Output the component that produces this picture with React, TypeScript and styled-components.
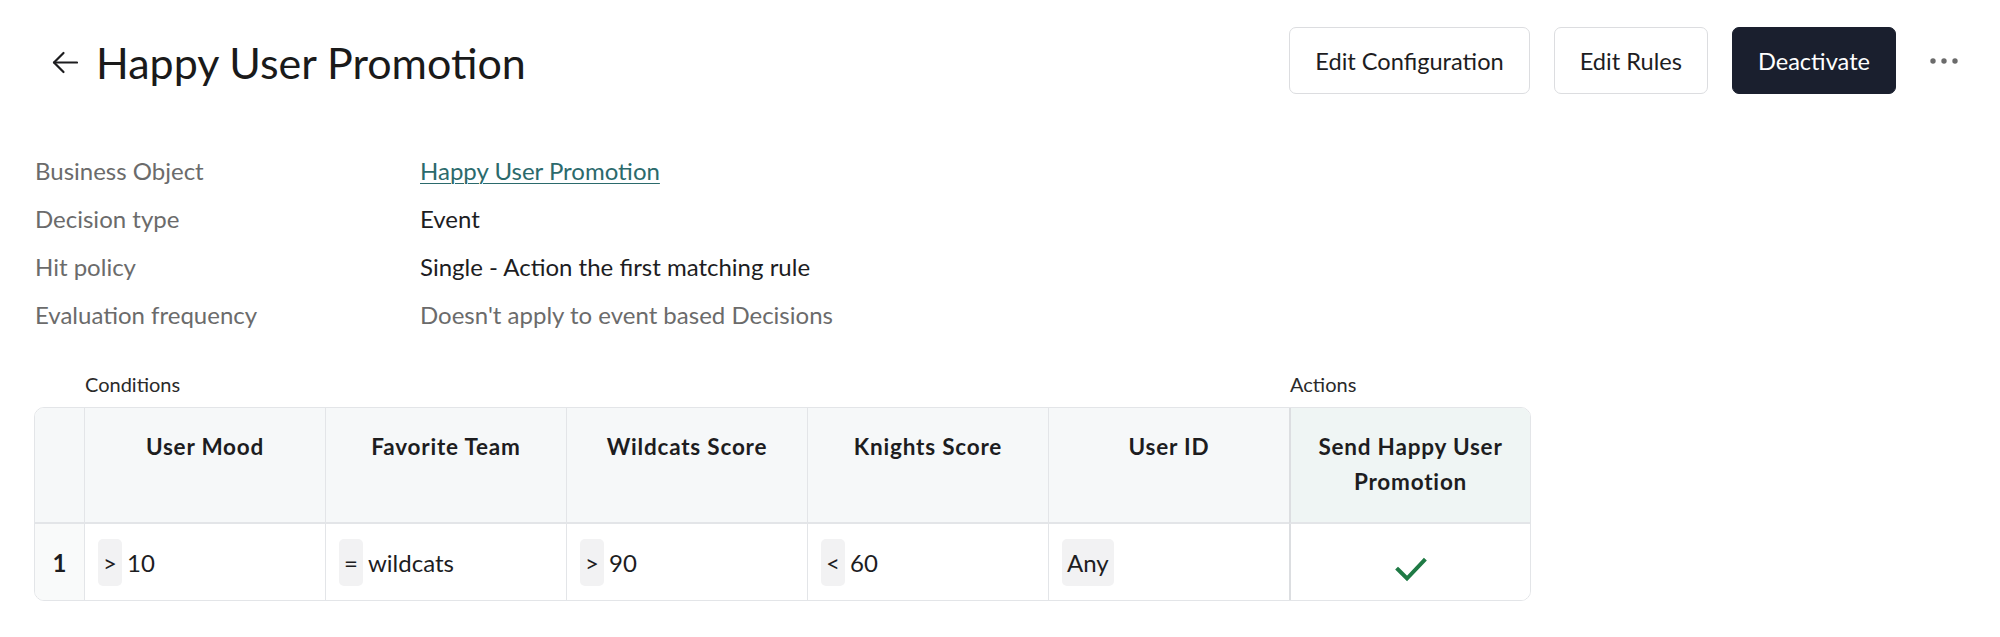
import React from "react";
import styled, { createGlobalStyle } from "styled-components";

const GlobalStyle = createGlobalStyle`
  html, body { margin: 0; padding: 0; background: #ffffff; }
  body { font-family: "Lato", "Noto Sans", sans-serif; color: #1d1d1f; }
  * { box-sizing: border-box; }
`;

const Page = styled.div`
  padding: 0 36px 0 34px;
`;

const Header = styled.header`
  display: flex;
  align-items: center;
  padding-top: 27px;
  height: 94px;
`;

const TitleGroup = styled.div`
  display: flex;
  align-items: center;
  gap: 18px;
  padding-left: 18px;
  padding-top: 4px;
  flex: 1;
`;

const BackButton = styled.button`
  display: flex;
  align-items: center;
  justify-content: center;
  border: none;
  background: none;
  padding: 0;
  cursor: pointer;
  color: #1d1d1f;
`;

const Title = styled.h1`
  margin: 0;
  font-size: 43px;
  font-weight: 400;
  color: #1a1a1a;
  line-height: 1.2;
`;

const Actions = styled.div`
  display: flex;
  align-items: center;
  gap: 24px;
`;

const Button = styled.button<{ $primary?: boolean }>`
  height: 67px;
  padding: 0 25px;
  border-radius: 7px;
  font-family: inherit;
  font-size: 23.6px;
  cursor: pointer;
  border: 1px solid ${(p) => (p.$primary ? "#1a1f2e" : "#dcdde0")};
  background: ${(p) => (p.$primary ? "#1a1f2e" : "#ffffff")};
  color: ${(p) => (p.$primary ? "#ffffff" : "#1d1d1f")};
`;

const MoreButton = styled.button`
  width: 40px;
  height: 40px;
  margin-left: 4px;
  display: flex;
  align-items: center;
  justify-content: center;
  border: none;
  background: none;
  padding: 0;
  cursor: pointer;
`;

const Details = styled.dl`
  display: grid;
  grid-template-columns: 386px 1fr;
  grid-auto-rows: 48px;
  align-items: center;
  margin: 52px 0 0 0;
  font-size: 24px;
`;

const Label = styled.dt`
  color: #6b6b6b;
  padding-left: 1px;
`;

const Value = styled.dd<{ $muted?: boolean }>`
  margin: 0;
  color: ${(p) => (p.$muted ? "#6b6b6b" : "#1d1d1f")};
`;

const Link = styled.a`
  color: #2b6a6c;
  text-decoration: underline;
  text-underline-offset: 3px;
  text-decoration-thickness: 1px;
`;

const SectionLabels = styled.div`
  display: grid;
  grid-template-columns: 50px repeat(5, 241px) 241px;
  margin-top: 34px;
  height: 24px;
  align-items: center;
  font-size: 20px;
  color: #2a2a2a;
`;

const SectionLabel = styled.span<{ $span: number; $start: number }>`
  grid-column: ${(p) => p.$start} / span ${(p) => p.$span};
  padding-left: 1px;
`;

const Table = styled.div`
  margin-top: 11px;
  width: 1497px;
  border: 1px solid #e3e5e8;
  border-radius: 10px;
  overflow: hidden;
  display: grid;
  grid-template-columns: 49px repeat(6, 241px);
  grid-template-rows: 116px 76px;
`;

const HeadCell = styled.div<{ $action?: boolean; $first?: boolean }>`
  background: ${(p) => (p.$action ? "#eff5f4" : "#f6f8f9")};
  border-bottom: 2px solid #e3e5e8;
  border-left: ${(p) =>
    p.$first ? "none" : p.$action ? "2px solid #dcdee1" : "1px solid #e3e5e8"};
  padding: 21px 12px 0;
  text-align: center;
  font-size: 22.5px;
  font-weight: 700;
  letter-spacing: 0.8px;
  line-height: 35px;
  color: #1d1d1f;
`;

const BodyCell = styled.div<{ $action?: boolean; $center?: boolean; $num?: boolean }>`
  display: flex;
  align-items: center;
  justify-content: ${(p) => (p.$center ? "center" : "flex-start")};
  gap: 5px;
  padding: 0 ${(p) => (p.$center ? 0 : 13)}px;
  background: ${(p) => (p.$num ? "#f9fafa" : "#ffffff")};
  border-left: ${(p) =>
    p.$num ? "none" : p.$action ? "2px solid #dcdee1" : "1px solid #e3e5e8"};
  font-size: 24px;
  font-weight: ${(p) => (p.$num ? 700 : 400)};
  color: #1d1d1f;
`;

const Chip = styled.span`
  display: inline-flex;
  align-items: center;
  justify-content: center;
  height: 47px;
  min-width: 24px;
  padding: 0 5px;
  border-radius: 5px;
  background: #f2f2f3;
  color: #1d1d1f;
`;

const ArrowLeft = () => (
  <svg width="26" height="23" viewBox="0 0 26 23" fill="none">
    <path d="M2 11.5 H25" stroke="#1d1d1f" strokeWidth="2.2" strokeLinecap="round" />
    <path d="M11.5 2 L2 11.5 L11.5 21" stroke="#1d1d1f" strokeWidth="2.2" strokeLinecap="round" strokeLinejoin="round" />
  </svg>
);

const Dots = () => (
  <svg width="28" height="6" viewBox="0 0 28 6">
    <circle cx="3" cy="3" r="2.7" fill="#6b6b6b" />
    <circle cx="14" cy="3" r="2.7" fill="#6b6b6b" />
    <circle cx="25" cy="3" r="2.7" fill="#6b6b6b" />
  </svg>
);

const Check = () => (
  <svg width="32" height="26" viewBox="0 0 32 26" fill="none" style={{ marginTop: 16 }}>
    <path d="M3 12.5 L12 21.5 L29 3.5" stroke="#1f7a45" strokeWidth="4" strokeLinecap="square" />
  </svg>
);

const conditions = ["User Mood", "Favorite Team", "Wildcats Score", "Knights Score", "User ID"];
const values: { op?: string; value: string }[] = [
  { op: ">", value: "10" },
  { op: "=", value: "wildcats" },
  { op: ">", value: "90" },
  { op: "<", value: "60" },
  { value: "Any" },
];

export default function App() {
  return (
    <>
      <GlobalStyle />
      <Page>
        <Header>
          <TitleGroup>
            <BackButton aria-label="Back">
              <ArrowLeft />
            </BackButton>
            <Title>Happy User Promotion</Title>
          </TitleGroup>
          <Actions>
            <Button>Edit Configuration</Button>
            <Button>Edit Rules</Button>
            <Button $primary>Deactivate</Button>
            <MoreButton aria-label="More">
              <Dots />
            </MoreButton>
          </Actions>
        </Header>

        <Details>
          <Label>Business Object</Label>
          <Value>
            <Link href="#"> Happy User Promotion</Link>
          </Value>
          <Label>Decision type</Label>
          <Value>Event</Value>
          <Label>Hit policy</Label>
          <Value>Single - Action the first matching rule</Value>
          <Label>Evaluation frequency</Label>
          <Value $muted>Doesn't apply to event based Decisions</Value>
        </Details>

        <SectionLabels>
          <SectionLabel $start={2} $span={5}>Conditions</SectionLabel>
          <SectionLabel $start={7} $span={1}>Actions</SectionLabel>
        </SectionLabels>

        <Table>
          <HeadCell $first />
          {conditions.map((c) => (
            <HeadCell key={c}>{c}</HeadCell>
          ))}
          <HeadCell $action>Send Happy User Promotion</HeadCell>

          <BodyCell $num $center>1</BodyCell>
          {values.map((v, i) => (
            <BodyCell key={i}>
              {v.op ? (
                <>
                  <Chip>{v.op}</Chip>
                  <span>{v.value}</span>
                </>
              ) : (
                <Chip>{v.value}</Chip>
              )}
            </BodyCell>
          ))}
          <BodyCell $action $center>
            <Check />
          </BodyCell>
        </Table>
      </Page>
    </>
  );
}
